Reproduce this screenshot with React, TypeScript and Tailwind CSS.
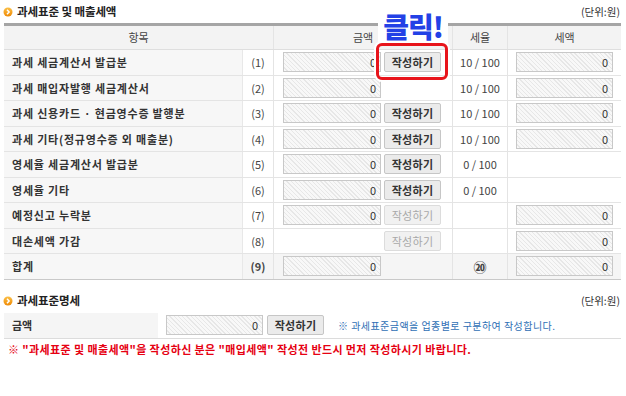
import React from "react";

const hatch =
  "bg-[image:repeating-linear-gradient(45deg,#f8f8f8_0px,#f8f8f8_2px,#e7e7e7_2px,#e7e7e7_3px)]";

function Bullet() {
  return (
    <svg width="10" height="10" viewBox="0 0 10 10" className="shrink-0">
      <defs>
        <linearGradient id="og" x1="0" y1="0" x2="0" y2="1">
          <stop offset="0" stopColor="#fbbf45" />
          <stop offset="1" stopColor="#ef8a06" />
        </linearGradient>
      </defs>
      <circle cx="5" cy="5" r="4.5" fill="url(#og)" />
      <path d="M4 2.8 L6.1 5 L4 7.2" stroke="#fff" strokeWidth="1.5" fill="none" />
    </svg>
  );
}

function Field({ w = "w-[98px]" }: { w?: string }) {
  return (
    <div
      className={`${w} h-[20px] border border-[#c8c8c8] ${hatch} text-right pr-[4px] text-[11px] leading-[18px] text-[#333]`}
    >
      0
    </div>
  );
}

function Btn({ disabled = false, w = "w-[57px]" }: { disabled?: boolean; w?: string }) {
  return (
    <div
      className={`${w} h-[20px] border rounded-[2px] flex items-center justify-center text-[11px] font-bold tracking-[0.3px] ${
        disabled
          ? "border-[#dcdcdc] bg-[#f1f1f1] text-[#a8a8a8] font-normal"
          : "border-[#c6c6c6] bg-[#ebebeb] text-[#333]"
      }`}
    >
      작성하기
    </div>
  );
}

type Row = {
  label: string;
  no: string;
  amount: boolean;
  btn: "on" | "off" | "none";
  rate: string;
  tax: boolean;
  total?: boolean;
};

const rows: Row[] = [
  { label: "과세 세금계산서 발급분", no: "(1)", amount: true, btn: "on", rate: "10 / 100", tax: true },
  { label: "과세 매입자발행 세금계산서", no: "(2)", amount: true, btn: "none", rate: "10 / 100", tax: true },
  { label: "과세 신용카드 · 현금영수증 발행분", no: "(3)", amount: true, btn: "on", rate: "10 / 100", tax: true },
  { label: "과세 기타(정규영수증 외 매출분)", no: "(4)", amount: true, btn: "on", rate: "10 / 100", tax: true },
  { label: "영세율 세금계산서 발급분", no: "(5)", amount: true, btn: "on", rate: "0 / 100", tax: false },
  { label: "영세율 기타", no: "(6)", amount: true, btn: "on", rate: "0 / 100", tax: false },
  { label: "예정신고 누락분", no: "(7)", amount: true, btn: "off", rate: "", tax: true },
  { label: "대손세액 가감", no: "(8)", amount: false, btn: "off", rate: "", tax: true },
  { label: "합계", no: "(9)", amount: true, btn: "none", rate: "⑳", tax: true, total: true },
];

export default function App() {
  return (
    <div className="relative w-[626px] h-[396px] bg-white font-['Noto_Sans_CJK_KR',sans-serif] text-[#333] overflow-hidden">
      <div className="px-[4px]">
        {/* Title */}
        <div className="h-[23px] flex items-center justify-between">
          <div className="flex items-center gap-[4px] -ml-[1px]">
            <Bullet />
            <span className="text-[11.5px] font-bold text-[#222] tracking-[-0.1px]">과세표준 및 매출세액</span>
          </div>
          <span className="text-[10.5px] text-[#333] pr-[2px]">(단위:원)</span>
        </div>

        {/* Table */}
        <div className="w-[617px] border-t-[3px] border-[#a5a5a5]">
          <div className="grid grid-cols-[270px_179px_55px_113px] h-[24px] bg-[#f3f3f3] border-b border-[#dedede] text-[11px] text-[#444]">
            <div className="flex items-center justify-center border-r border-[#e4e4e4]">항목</div>
            <div className="flex items-center justify-center border-r border-[#e4e4e4]">금액</div>
            <div className="flex items-center justify-center border-r border-[#e4e4e4]">세율</div>
            <div className="flex items-center justify-center">세액</div>
          </div>
          {rows.map((r, i) => (
            <div
              key={i}
              className={`grid grid-cols-[239px_31px_179px_55px_113px] h-[25.5px] border-b ${
                i === rows.length - 1 ? "border-[#c9c9c9] bg-[#f5f5f5]" : "border-[#e4e4e4]"
              }`}
            >
              <div className="flex items-center pl-[8px] bg-[#f7f7f7] border-r border-[#e8e8e8] text-[11px] font-bold text-[#333] tracking-[0.8px] whitespace-nowrap">
                {r.label}
              </div>
              <div
                className={`flex items-center justify-center border-r border-[#e4e4e4] text-[11px] text-[#444] ${
                  r.total ? "font-bold" : ""
                }`}
              >
                {r.no}
              </div>
              <div className="flex items-center pl-[9px] gap-[3px] border-r border-[#e4e4e4]">
                {r.amount ? <Field /> : <div className="w-[98px]" />}
                {r.btn === "on" && <Btn />}
                {r.btn === "off" && <Btn disabled />}
              </div>
              <div
                className={`flex items-center justify-center border-r border-[#e4e4e4] text-[11px] text-[#444] ${
                  r.total ? "font-bold text-[13px] text-[#222]" : ""
                }`}
              >
                {r.rate}
              </div>
              <div className="flex items-center pl-[8px]">{r.tax && <Field w="w-[97px]" />}</div>
            </div>
          ))}
        </div>

        {/* Second section */}
        <div className="mt-[10px] h-[23px] flex items-center justify-between">
          <div className="flex items-center gap-[4px] -ml-[1px]">
            <Bullet />
            <span className="text-[11.5px] font-bold text-[#222] tracking-[-0.1px]">과세표준명세</span>
          </div>
          <span className="text-[10.5px] text-[#333] pr-[2px]">(단위:원)</span>
        </div>
        <div className="w-[617px] h-[26px] flex items-center border-b border-[#dcdcdc]">
          <div className="w-[154px] h-full flex items-center pl-[8px] bg-[#f5f5f5] text-[11px] font-bold text-[#333]">
            금액
          </div>
          <div className="flex items-center pl-[8px] gap-[4px]">
            <Field w="w-[97px]" />
            <Btn w="w-[57px]" />
          </div>
          <span className="ml-[14px] text-[10px] text-[#2f6fb5] tracking-[0.45px]">
            ※ 과세표준금액을 업종별로 구분하여 작성합니다.
          </span>
        </div>
        <div className="h-[21px] flex items-center pl-[4px] text-[11px] font-bold text-[#e60012] tracking-[0.4px] whitespace-nowrap">
          ※ "과세표준 및 매출세액"을 작성하신 분은 "매입세액" 작성전 반드시 먼저 작성하시기 바랍니다.
        </div>
      </div>

      {/* Click callout overlay */}
      <div className="absolute left-[378px] top-[8px] w-[70px] h-[35px] bg-white flex items-center justify-center">
        <span className="text-[28px] leading-none font-black text-[#2341e6] tracking-[-1px]">클릭!</span>
      </div>
      <div className="absolute left-[376px] top-[43px] w-[72px] h-[37px] border-[3px] border-[#e8141b] rounded-[6px] shadow-[0_0_0_2px_#fff]" />
    </div>
  );
}
